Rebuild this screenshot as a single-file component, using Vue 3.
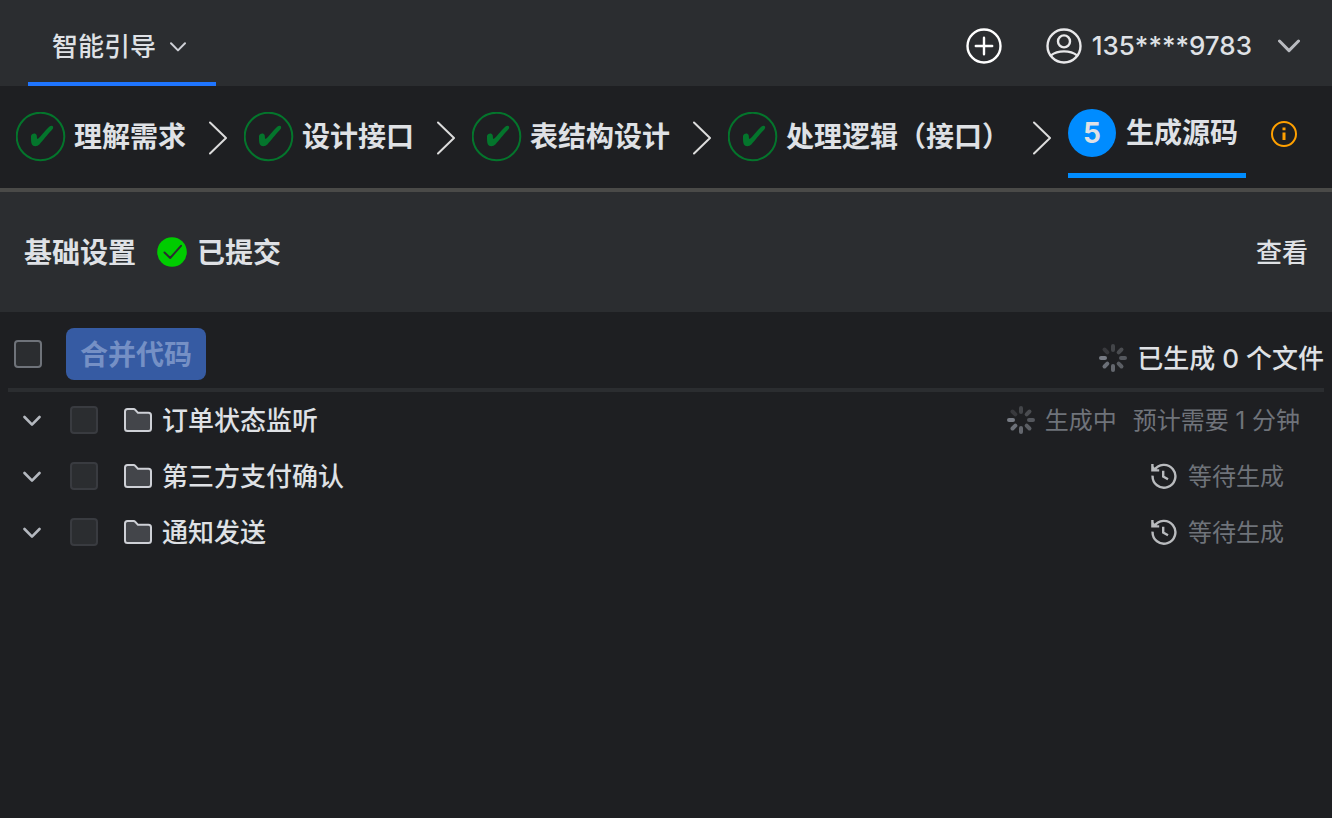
<template>
  <div class="guide-page">
    <header class="top-bar">
      <button type="button" class="guide-tab">
        <span>智能引导</span>
        <svg class="tab-arrow" viewBox="0 0 16 10" aria-hidden="true">
          <path d="M1 1.2 L8 8.4 L15 1.2" />
        </svg>
      </button>
      <div class="top-actions">
        <button type="button" class="icon-btn" aria-label="新建">
          <svg class="add-icon" viewBox="0 0 36 36" aria-hidden="true">
            <circle cx="18" cy="18" r="16.5" />
            <path d="M18 9.8 V26.2 M9.8 18 H26.2" />
          </svg>
        </button>
        <button type="button" class="user-btn">
          <svg class="user-icon" viewBox="0 0 36 36" aria-hidden="true">
            <circle cx="18" cy="18" r="16.5" />
            <circle cx="18" cy="13.4" r="6" />
            <path d="M5 27.4 C8.5 24.6 13 23.4 18 23.4 S27.5 24.6 31 27.4" />
          </svg>
          <span>{{ account }}</span>
          <svg class="user-arrow" viewBox="0 0 22 14" aria-hidden="true">
            <path d="M1.5 2 L11 11.6 L20.5 2" />
          </svg>
        </button>
      </div>
    </header>

    <nav class="steps">
      <template v-for="step in steps" :key="step.id">
        <button type="button" class="step">
          <svg class="step-done" viewBox="0 0 50 50" aria-hidden="true">
            <circle cx="24.5" cy="24.5" r="23.8" />
            <path
              d="M15 24.3 C15 21.2 19.8 20.2 20.7 23.2 C21 24.8 20.8 26.8 21.6 27 C22.6 27.2 29.5 18.2 33.2 14.8 C34.6 13.6 36.6 13.6 37 14.6 C37.6 16.2 36.6 17.4 35.4 18.6 C31.6 22.4 26.6 29 23.6 32.2 C21.2 34.8 17 34.8 15.8 32.2 C14.9 30.2 15 27 15 24.3 Z"
            />
          </svg>
          <span>{{ step.name }}</span>
        </button>
        <svg class="step-arrow" viewBox="0 0 18 34" aria-hidden="true">
          <path d="M1 1.5 L17 17 L1 32.5" />
        </svg>
      </template>
      <button type="button" class="step-active" aria-current="step">
        <span class="step-num">5</span>
        <span>生成源码</span>
      </button>
      <button type="button" class="icon-btn info-btn" aria-label="说明">
        <svg class="info-icon" viewBox="0 0 26 26" aria-hidden="true">
          <circle cx="13" cy="13" r="12" />
          <path d="M13 11.5 V19 M13 6.5 V9.2" />
        </svg>
      </button>
    </nav>

    <section class="base-setting">
      <h2>基础设置</h2>
      <svg class="ok-icon" viewBox="0 0 30 30" aria-hidden="true">
        <circle cx="15" cy="15" r="14.8" />
        <path d="M7.5 15.5 L13.2 21 L24 8.8" />
      </svg>
      <strong>已提交</strong>
      <button type="button" class="view-btn">查看</button>
    </section>

    <main class="code-panel">
      <div class="toolbar">
        <input v-model="checkAll" type="checkbox" class="check" aria-label="全选" />
        <button type="button" class="merge-btn" disabled>合并代码</button>
        <div class="total">
          <svg class="spinner" viewBox="0 0 28 28" aria-hidden="true">
            <line
              v-for="s in spokes"
              :key="s.angle"
              x1="14"
              y1="2"
              x2="14"
              y2="6"
              :stroke="s.color"
              :transform="`rotate(${s.angle} 14 14)`"
            />
          </svg>
          <span>已生成 0 个文件</span>
        </div>
      </div>

      <ul class="file-list">
        <li v-for="item in files" :key="item.id" class="file-row">
          <button type="button" class="icon-btn" aria-label="展开">
            <svg class="row-arrow" viewBox="0 0 18 12" aria-hidden="true">
              <path d="M1.5 2 L9 9.6 L16.5 2" />
            </svg>
          </button>
          <input :id="'file-' + item.id" type="checkbox" class="check" disabled />
          <label :for="'file-' + item.id" class="file-name">
            <svg class="folder" viewBox="0 0 28 24" aria-hidden="true">
              <path
                d="M3.5 1 H9.6 Q10.6 1 11.3 1.8 L14 4.8 H24.5 Q27 4.8 27 7.3 V20.5 Q27 23 24.5 23 H3.5 Q1 23 1 20.5 V3.5 Q1 1 3.5 1 Z"
              />
            </svg>
            <span>{{ item.name }}</span>
          </label>
          <div v-if="item.running" class="status">
            <svg class="spinner" viewBox="0 0 28 28" aria-hidden="true">
              <line
                v-for="s in spokes"
                :key="s.angle"
                x1="14"
                y1="2"
                x2="14"
                y2="6"
                :stroke="s.color"
                :transform="`rotate(${s.angle} 14 14)`"
              />
            </svg>
            <span>生成中</span>
            <span class="estimate">预计需要 1 分钟</span>
          </div>
          <div v-else class="status waiting">
            <svg class="history" viewBox="0 0 28 28" aria-hidden="true">
              <path d="M4.2 8.4 A11.4 11.4 0 1 1 2.6 13.6" />
              <path d="M2.4 2 V8.4 H9.2" />
              <path class="history-head" d="M2.4 3.6 L7.6 8.4 H2.4 Z" />
              <path d="M13.2 8.8 V14.6 L18 17.2" />
            </svg>
            <span>等待生成</span>
          </div>
        </li>
      </ul>
    </main>
  </div>
</template>

<script setup>
import { ref } from "vue";

const account = ref("135****9783");
const checkAll = ref(false);

const steps = [
  { id: 1, name: "理解需求" },
  { id: 2, name: "设计接口" },
  { id: 3, name: "表结构设计" },
  { id: 4, name: "处理逻辑（接口）" },
];

const files = ref([
  { id: 1, name: "订单状态监听", running: true },
  { id: 2, name: "第三方支付确认", running: false },
  { id: 3, name: "通知发送", running: false },
]);

// 加载图标的八条辐线
const spokes = [
  { angle: 0, color: "#434549" },
  { angle: 45, color: "#4a4c50" },
  { angle: 90, color: "#54575d" },
  { angle: 135, color: "#5b5e64" },
  { angle: 180, color: "#64676e" },
  { angle: 225, color: "#6c7078" },
  { angle: 270, color: "#777b84" },
  { angle: 315, color: "#38393d" },
];
</script>

<style>
body {
  margin: 0;
  background: #1e1f22;
}
</style>

<style scoped>
.guide-page {
  min-height: 100vh;
  background: #1e1f22;
  color: #dfe1e5;
  font-family: Inter, "Noto Sans CJK SC", sans-serif;
  font-size: 26px;
  font-weight: 500;
  line-height: 40px;
  white-space: nowrap;
}

button {
  display: flex;
  align-items: center;
  padding: 0;
  border: 0;
  background: none;
  color: inherit;
  font: inherit;
  cursor: pointer;
}

svg {
  flex: none;
  fill: none;
  stroke-linecap: round;
  stroke-linejoin: round;
}

/* 顶部栏 */
.top-bar {
  display: flex;
  justify-content: space-between;
  height: 86px;
  padding: 0 32px 0 28px;
  background: #2b2d30;
}

.guide-tab {
  box-sizing: border-box;
  gap: 14px;
  padding: 12px 30px 0 24px;
  border-bottom: 4px solid #1f75ff;
}

.tab-arrow {
  width: 16px;
  height: 10px;
  stroke: #ced0d6;
  stroke-width: 2;
}

.top-actions {
  display: flex;
  align-items: center;
  gap: 44px;
  padding-top: 6px;
}

.add-icon,
.user-icon {
  width: 36px;
  height: 36px;
  stroke: #ffffff;
  stroke-width: 2.4;
}

.user-icon {
  margin-right: 10px;
  stroke: #e8e8ea;
}

.user-arrow {
  width: 22px;
  height: 14px;
  margin-left: 26px;
  stroke: #b9bbc0;
  stroke-width: 3;
}

/* 步骤条 */
.steps {
  display: flex;
  height: 102px;
  padding-left: 16px;
  border-bottom: 4px solid #4a4a48;
  font-size: 28px;
  font-weight: 700;
}

.step {
  gap: 8px;
}

.step-done {
  width: 50px;
  height: 50px;
}

.step-done circle {
  stroke: #04752c;
  stroke-width: 2;
}

.step-done path {
  fill: #04752c;
}

.step-arrow {
  align-self: center;
  width: 18px;
  height: 34px;
  margin: 2px 17px 0 23px;
  stroke: #dcdcdc;
  stroke-width: 2;
}

.step-active {
  align-self: flex-start;
  box-sizing: border-box;
  gap: 10px;
  height: 92px;
  padding: 6px 8px 0 0;
  border-bottom: 5px solid #008cff;
}

.step-num {
  width: 48px;
  border-radius: 50%;
  background: #008cff;
  line-height: 48px;
  text-align: center;
}

.info-btn {
  align-self: center;
  margin: 0 0 6px 25px;
}

.info-icon {
  width: 26px;
  height: 26px;
  stroke: #ffa000;
  stroke-width: 2;
}

.info-icon path {
  stroke-width: 3;
  stroke-linecap: butt;
}

/* 基础设置 */
.base-setting {
  display: flex;
  align-items: center;
  height: 120px;
  padding: 0 24px;
  background: #2b2d30;
}

.base-setting h2,
.base-setting strong {
  margin: 0;
  padding-top: 2px;
  font-size: 28px;
  font-weight: 700;
}

.ok-icon {
  width: 30px;
  height: 30px;
  margin: 0 10px 0 21px;
}

.ok-icon circle {
  fill: #00cc00;
}

.ok-icon path {
  stroke: #2b2d30;
  stroke-width: 2;
}

.view-btn {
  margin-left: auto;
  padding-top: 2px;
}

/* 代码面板 */
.code-panel {
  padding: 0 8px;
}

.toolbar {
  display: flex;
  align-items: center;
  height: 76px;
  padding-left: 6px;
  border-bottom: 4px solid #2b2d30;
}

.check {
  appearance: none;
  flex: none;
  box-sizing: border-box;
  width: 28px;
  height: 28px;
  margin: 0;
  border: 2px solid #6f737a;
  border-radius: 4px;
  background: #2b2d30;
}

.toolbar .check {
  margin: 8px 24px 0 0;
}

.check:disabled {
  border-color: #393b40;
}

.merge-btn {
  height: 52px;
  margin-top: 8px;
  padding: 2px 14px 0;
  border-radius: 8px;
  background: #365ba3;
  color: #7590c5;
  font-size: 28px;
  font-weight: 700;
}

.total {
  display: flex;
  align-items: center;
  gap: 10px;
  margin: 16px 0 0 auto;
}

.total span,
.file-name span,
.status span {
  padding-top: 2px;
}

.spinner {
  width: 28px;
  height: 28px;
  stroke-width: 4;
}

.file-list {
  margin: 0;
  padding: 0;
  list-style: none;
}

.file-row {
  display: flex;
  align-items: center;
  height: 56px;
  padding: 0 24px 0 15px;
}

.row-arrow {
  width: 18px;
  height: 12px;
  margin: 2px 29px 0 0;
  stroke: #b4b8bf;
  stroke-width: 2.6;
}

.file-name {
  display: flex;
  align-items: center;
  gap: 10px;
  margin-left: 26px;
}

.folder {
  width: 28px;
  height: 24px;
  fill: #43454a;
  stroke: #ced0d6;
  stroke-width: 2;
}

.status {
  display: flex;
  align-items: center;
  gap: 10px;
  margin-left: auto;
  color: #6f737a;
  font-size: 24px;
  font-weight: 400;
}

.estimate {
  margin-left: 6px;
}

.waiting {
  padding-right: 16px;
}

.history {
  width: 28px;
  height: 28px;
  stroke: #b9bbbe;
  stroke-width: 2.4;
  stroke-linecap: butt;
  stroke-linejoin: miter;
}

.history-head {
  fill: #b9bbbe;
  stroke: none;
}
</style>
